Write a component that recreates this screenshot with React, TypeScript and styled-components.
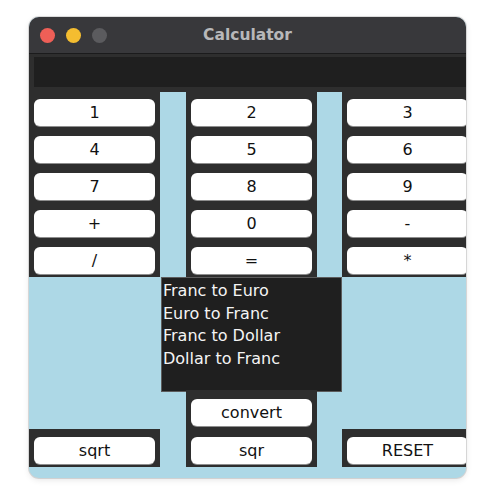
import React from "react";
import styled, { createGlobalStyle } from "styled-components";

const GlobalStyle = createGlobalStyle`
  html, body {
    margin: 0;
    padding: 0;
    background: #ffffff;
  }
  body {
    font-family: "DejaVu Sans", "Liberation Sans", sans-serif;
  }
`;

const Page = styled.div`
  width: 500px;
  height: 499px;
  padding: 17px 0 0 29px;
  box-sizing: border-box;
`;

const Window = styled.div`
  width: 437px;
  height: 461px;
  border-radius: 10px;
  overflow: hidden;
  background: #add8e6;
  box-shadow: 0 0 0 1px rgba(0, 0, 0, 0.12), 0 2px 6px rgba(0, 0, 0, 0.1);
  display: flex;
  flex-direction: column;
`;

const TitleBar = styled.div`
  height: 36px;
  flex: none;
  background: #38383b;
  border-bottom: 1px solid #1b1b1c;
  position: relative;
  display: flex;
  align-items: center;
  justify-content: center;
`;

const Lights = styled.div`
  position: absolute;
  left: 11px;
  top: 11px;
  display: flex;
  gap: 11px;
`;

const Light = styled.span<{ $color: string }>`
  width: 15px;
  height: 15px;
  border-radius: 50%;
  background: ${(p) => p.$color};
`;

const Title = styled.div`
  font-weight: bold;
  font-size: 15.5px;
  color: #b8b8ba;
`;

const DisplayArea = styled.div`
  flex: none;
  height: 38px;
  box-sizing: border-box;
  padding: 3px 0 5px 5px;
  background: #2e2e2e;
`;

const Field = styled.div`
  height: 30px;
  background: #1f1f1f;
`;

const Grid = styled.div`
  flex: none;
  display: grid;
  grid-template-columns: 131px 26px 131px 25px 131px;
`;

const Keys = styled(Grid)`
  height: 185px;
`;

const Lower = styled(Grid)`
  grid-template-rows: 115px 75px;
`;

const Panel = styled.div<{ $col: number; $top: number; $gap?: number }>`
  grid-column: ${(p) => p.$col};
  grid-row: 2;
  align-self: end;
  background: #2e2e2e;
  padding: ${(p) => p.$top}px 5px 3px;
  display: flex;
  flex-direction: column;
  gap: ${(p) => p.$gap ?? 10}px;
`;

const KeyPanel = styled(Panel)`
  grid-row: 1;
  align-self: stretch;
`;

const Key = styled.button`
  height: 27px;
  border: none;
  border-radius: 6px;
  background: #ffffff;
  box-shadow: 0 1px 0 #8e8e8e;
  font-family: "DejaVu Sans", "Liberation Sans", sans-serif;
  font-size: 16px;
  color: #111;
  padding: 0;
  cursor: pointer;
`;

const List = styled.ul`
  grid-column: 2 / 5;
  grid-row: 1;
  margin: 0 0 0 1px;
  padding: 2px 1px;
  list-style: none;
  background: #1f1f1f;
  border: 1px solid #5c5c5c;
  color: #f4f4f4;
  font-size: 16px;
  line-height: 22.5px;
`;

const columns = [
  ["1", "4", "7", "+", "/"],
  ["2", "5", "8", "0", "="],
  ["3", "6", "9", "-", "*"],
];

const conversions = ["Franc to Euro", "Euro to Franc", "Franc to Dollar", "Dollar to Franc"];

export default function App() {
  return (
    <Page>
      <GlobalStyle />
      <Window>
        <TitleBar>
          <Lights>
            <Light $color="#ee5f57" />
            <Light $color="#f4bd30" />
            <Light $color="#5b5b5e" />
          </Lights>
          <Title>Calculator</Title>
        </TitleBar>
        <DisplayArea>
          <Field />
        </DisplayArea>
        <Keys>
          {columns.map((keys, i) => (
            <KeyPanel key={i} $col={i * 2 + 1} $top={7}>
              {keys.map((k) => (
                <Key key={k}>{k}</Key>
              ))}
            </KeyPanel>
          ))}
        </Keys>
        <Lower>
          <List>
            {conversions.map((c) => (
              <li key={c}>{c}</li>
            ))}
          </List>
          <Panel $col={1} $top={8}>
            <Key>sqrt</Key>
          </Panel>
          <Panel $col={3} $top={9} $gap={11}>
            <Key>convert</Key>
            <Key>sqr</Key>
          </Panel>
          <Panel $col={5} $top={8}>
            <Key>RESET</Key>
          </Panel>
        </Lower>
      </Window>
    </Page>
  );
}
